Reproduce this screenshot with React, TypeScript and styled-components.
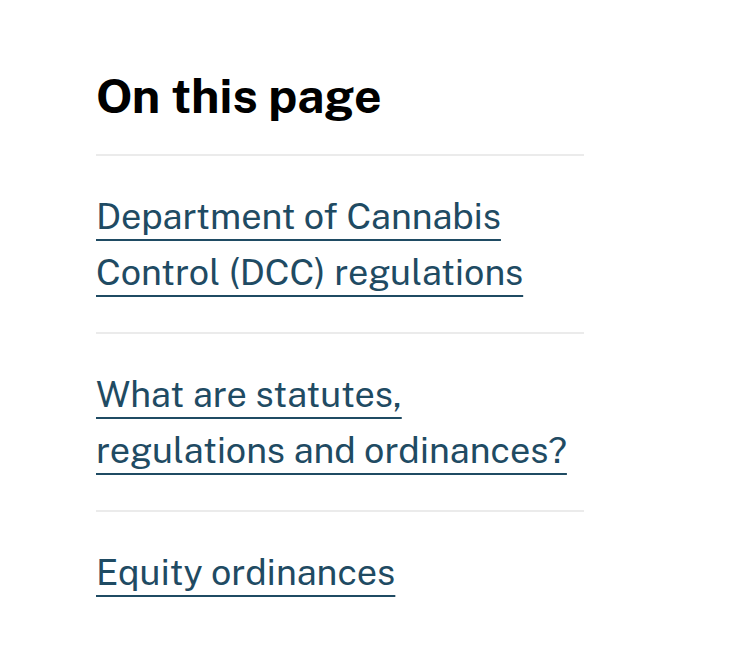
import React from "react";
import styled, { createGlobalStyle } from "styled-components";

const Global = createGlobalStyle`
  html, body { margin: 0; padding: 0; background: #ffffff; }
  body { font-family: "Public Sans", "Noto Sans", sans-serif; }
`;

const Aside = styled.nav`
  width: 488px;
  padding: 66px 0 0 96px;
`;

const Heading = styled.h2`
  margin: 0;
  font-size: 48px;
  line-height: 60px;
  font-weight: 700;
  color: #000;
  padding-bottom: 28px;
`;

const List = styled.ul`
  list-style: none;
  margin: 0;
  padding: 0;
`;

const Item = styled.li`
  border-top: 2px solid #ebebeb;
  padding: 32px 0 32px;
`;

const Link = styled.a`
  font-size: 36px;
  line-height: 56px;
  color: #1f4b63;
  text-decoration: underline;
  text-decoration-thickness: 2px;
  text-underline-offset: 10px;
`;

const items = [
  "Department of Cannabis Control (DCC) regulations",
  "What are statutes, regulations and ordinances?",
  "Equity ordinances",
];

export default function App() {
  return (
    <>
      <Global />
      <Aside>
        <Heading>On this page</Heading>
        <List>
          {items.map((t) => (
            <Item key={t}>
              <Link href="#">{t}</Link>
            </Item>
          ))}
        </List>
      </Aside>
    </>
  );
}
